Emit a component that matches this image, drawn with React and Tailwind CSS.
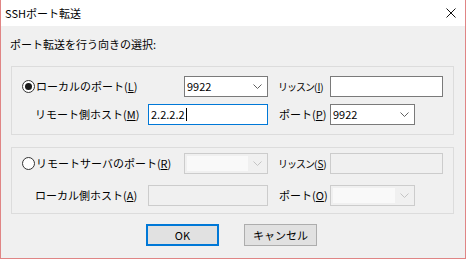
import React from 'react';

const font = { fontFamily: '"Noto Sans CJK JP", "Noto Sans", sans-serif' };

const Chevron = ({ disabled }) => (
    <svg width="9" height="5" viewBox="0 0 9 5" className="shrink-0">
        <path d="M0.5 0.5 L4.5 4.5 L8.5 0.5" fill="none" stroke={disabled ? '#c4c4c4' : '#606060'} strokeWidth="1" />
    </svg>
);

const Combo = ({ value, width, disabled }) => (
    <div
        className={`flex items-center h-[21px] border shrink-0 ${disabled ? 'border-[#cccccc] bg-[#f0f0f0]' : 'border-[#7a7a7a] bg-white'}`}
        style={{ width }}
    >
        {disabled ? (
            <div className="flex-1 h-[15px] ml-[2px] bg-[#f9f9f9]" />
        ) : (
            <span className="flex-1 pl-[2px] text-[11px] leading-none">{value}</span>
        )}
        <div className="w-[19px] flex justify-center">
            <Chevron disabled={disabled} />
        </div>
    </div>
);

const Field = ({ value, width, disabled, focused }) => (
    <div
        className={`flex items-center h-[21px] border shrink-0 ${
            disabled ? 'border-[#cccccc] bg-[#f0f0f0]' : focused ? 'border-[#0078d7] bg-white' : 'border-[#7a7a7a] bg-white'
        }`}
        style={{ width }}
    >
        {value && (
            <span className="pl-[2px] text-[11px] leading-none flex items-center">
                {value}
                {focused && <span className="inline-block w-px h-[13px] bg-black ml-px" />}
            </span>
        )}
    </div>
);

const Radio = ({ checked }) => (
    <div className="w-[13px] h-[13px] rounded-full border border-[#333333] bg-white flex items-center justify-center shrink-0">
        {checked && <div className="w-[7px] h-[7px] rounded-full bg-[#1a1a1a]" />}
    </div>
);

const Key = ({ k }) => (
    <span className="tracking-normal">
        (<u className="underline-offset-1">{k}</u>)
    </span>
);

const Group = ({ radio, k1, portLabel, listen, k3, hostLabel, k4, port, k5, active, className }) => (
    <div className={`mx-[10px] w-[443px] border border-[#dcdcdc] ${className}`}>
        {/* first row */}
        <div className="flex items-center h-[21px]">
            <div className="w-[172px] shrink-0 flex items-center pl-[10px] gap-[1px] whitespace-nowrap">
                <Radio checked={active} />
                <span className="text-[11px] leading-none">
                    {radio}
                    <Key k={k1} />
                </span>
            </div>
            <Combo value={portLabel} width={84} disabled={!active} />
            <div className="w-[62px] shrink-0 pl-[10px] text-[10px] leading-none whitespace-nowrap">
                <span className="tracking-[-1px]">{listen}</span>
                <Key k={k3} />
            </div>
            <Field width={113} disabled={!active} />
        </div>
        {/* second row */}
        <div className={`flex items-center h-[21px] ${active ? 'mt-[7px]' : 'mt-[11px]'}`}>
            <div className="w-[136px] shrink-0 pl-[23px] text-[11px] leading-none whitespace-nowrap">
                {hostLabel}
                <Key k={k4} />
            </div>
            <Field width={120} value={active ? '2.2.2.2' : ''} focused={active} disabled={!active} />
            <div className="w-[62px] shrink-0 pl-[11px] text-[11px] leading-none whitespace-nowrap">
                {port}
                <Key k={k5} />
            </div>
            <Combo value={active ? '9922' : ''} width={85} disabled={!active} />
        </div>
    </div>
);

const App = () => {
    return (
        <div className="w-[466px] h-[259px] flex flex-col border-x border-b border-[#e08585] text-black overflow-hidden" style={font}>
            {/* Title bar */}
            <div className="h-[26px] bg-white flex items-center justify-between pl-[4px] pr-[9px] shrink-0">
                <span className="text-[11px] leading-none">SSHポート転送</span>
                <svg width="10" height="10" viewBox="0 0 10 10">
                    <path d="M0.5 0.5 L9.5 9.5 M9.5 0.5 L0.5 9.5" stroke="#111" strokeWidth="1" />
                </svg>
            </div>

            {/* Body */}
            <div className="flex-1 bg-[#f0f0f0] flex flex-col">
                <div className="mt-[11px] pl-[9px] h-[14px] text-[11px] leading-[14px]">ポート転送を行う向きの選択:</div>

                <Group
                    className="mt-[15px] pt-[9px] pb-[9px]"
                    active
                    radio="ローカルのポート"
                    k1="L"
                    portLabel="9922"
                    listen="リッスン"
                    k3="I"
                    hostLabel="リモート側ホスト"
                    k4="M"
                    port="ポート"
                    k5="P"
                />

                <Group
                    className="mt-[12px] pt-[5px] pb-[7px]"
                    radio="リモートサーバのポート"
                    k1="R"
                    listen="リッスン"
                    k3="S"
                    hostLabel="ローカル側ホスト"
                    k4="A"
                    port="ポート"
                    k5="O"
                />

                {/* Buttons */}
                <div className="flex mt-[10px] pl-[145px] gap-[25px]">
                    <button className="w-[73px] h-[22px] border-2 border-[#0078d7] bg-[#e1e1e1] text-[11px] leading-none">OK</button>
                    <button className="w-[73px] h-[22px] border border-[#adadad] bg-[#e1e1e1] text-[11px] leading-none">キャンセル</button>
                </div>
            </div>
        </div>
    );
};

export default App;
